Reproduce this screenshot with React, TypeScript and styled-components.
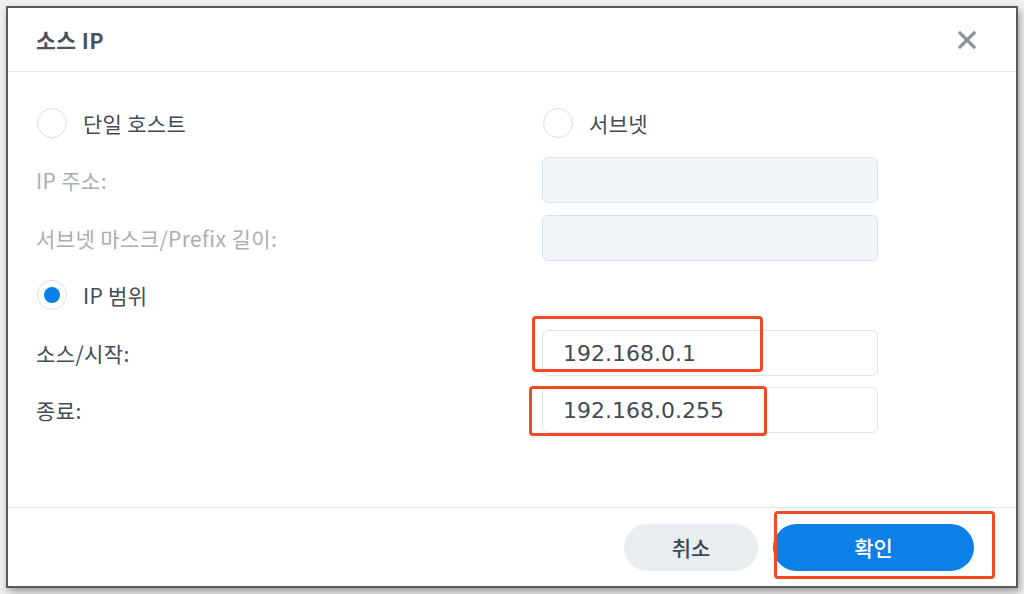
import React, { useState } from "react";
import styled, { createGlobalStyle } from "styled-components";

const GlobalStyle = createGlobalStyle`
  html, body {
    margin: 0;
    padding: 0;
    background: #f1f1f1;
    font-family: "DejaVu Sans", "Noto Sans CJK KR", sans-serif;
  }
`;

const Page = styled.div`
  width: 1024px;
  height: 594px;
  overflow: hidden;
  padding: 6px 0 0 6px;
  box-sizing: border-box;
`;

const Window = styled.div`
  width: 1012px;
  height: 582px;
  box-sizing: border-box;
  border: 2px solid #5a5a5a;
  background: #ffffff;
  box-shadow: 2px 4px 8px rgba(0, 0, 0, 0.35);
  display: flex;
  flex-direction: column;
`;

const Header = styled.div`
  height: 63px;
  display: flex;
  align-items: center;
  justify-content: space-between;
  padding: 0 40px 0 28px;
  border-bottom: 1px solid #e1e8ef;
`;

const Title = styled.div`
  font-family: "Noto Sans CJK KR", sans-serif;
  font-weight: 700;
  font-size: 21.5px;
  letter-spacing: 0.4px;
  color: #4a5460;
`;

const CloseButton = styled.button`
  border: none;
  background: none;
  padding: 0;
  width: 18px;
  height: 18px;
  cursor: pointer;
  display: flex;
`;

const Body = styled.div`
  flex: 1;
  padding: 28px 0 0 28px;
  display: grid;
  grid-template-columns: 506px 336px;
  grid-auto-rows: 46px;
  row-gap: 11.4px;
  align-items: center;
`;

const RadioLabel = styled.label`
  display: flex;
  align-items: center;
  gap: 16px;
  font-family: "Noto Sans CJK KR", sans-serif;
  font-size: 21px;
  letter-spacing: 0.3px;
  color: #424c57;
  cursor: pointer;
`;

const RadioCircle = styled.span<{ $checked: boolean }>`
  width: 30px;
  height: 30px;
  box-sizing: border-box;
  border-radius: 50%;
  border: 1.5px solid #d6dee8;
  display: flex;
  align-items: center;
  justify-content: center;
  margin-left: 1px;

  &::after {
    content: "";
    width: 16px;
    height: 16px;
    border-radius: 50%;
    background: #0a7fe8;
    display: ${({ $checked }) => ($checked ? "block" : "none")};
  }
`;

const FieldLabel = styled.div<{ $disabled?: boolean }>`
  font-family: "Noto Sans CJK KR", sans-serif;
  font-size: 21px;
  letter-spacing: 0.4px;
  color: ${({ $disabled }) => ($disabled ? "#a9aeb5" : "#424c57")};
`;

const InputWrap = styled.div`
  position: relative;
  height: 46px;
`;

const Input = styled.input<{ $disabled?: boolean }>`
  width: 100%;
  height: 100%;
  box-sizing: border-box;
  border: 1.5px solid ${({ $disabled }) => ($disabled ? "#d8e1eb" : "#dce4ed")};
  border-radius: 6px;
  background: ${({ $disabled }) => ($disabled ? "#f3f6f9" : "#ffffff")};
  padding: 2px 0 0 20px;
  font-family: "DejaVu Sans", sans-serif;
  font-size: 22px;
  color: #424c57;
  outline: none;
`;

const Marker = styled.div<{ $top: number; $left: number; $w: number; $h: number }>`
  position: absolute;
  top: ${({ $top }) => $top}px;
  left: ${({ $left }) => $left}px;
  width: ${({ $w }) => $w}px;
  height: ${({ $h }) => $h}px;
  box-sizing: border-box;
  border: 3px solid #f24b24;
  border-radius: 4px;
  pointer-events: none;
`;

const Footer = styled.div`
  height: 78px;
  border-top: 1px solid #e1e8ef;
  display: flex;
  align-items: center;
  justify-content: flex-end;
  gap: 15px;
  padding-right: 42px;
`;

const Button = styled.button<{ $primary?: boolean }>`
  position: relative;
  height: 47px;
  width: ${({ $primary }) => ($primary ? "201px" : "134px")};
  border: none;
  border-radius: 24px;
  background: ${({ $primary }) => ($primary ? "#0a80e8" : "#e8edf2")};
  color: ${({ $primary }) => ($primary ? "#ffffff" : "#3f4953")};
  font-family: "Noto Sans CJK KR", sans-serif;
  font-size: 21px;
  font-weight: 500;
  cursor: pointer;
`;

export default function App() {
  const [mode, setMode] = useState<"host" | "subnet" | "range">("range");

  return (
    <>
      <GlobalStyle />
      <Page>
        <Window>
          <Header>
            <Title>소스 IP</Title>
            <CloseButton aria-label="close">
              <svg width="18" height="18" viewBox="0 0 18 18">
                <path d="M2 2 L16 16 M16 2 L2 16" stroke="#8e959c" strokeWidth="3.2" strokeLinecap="square" />
              </svg>
            </CloseButton>
          </Header>

          <Body>
            <RadioLabel onClick={() => setMode("host")}>
              <RadioCircle $checked={mode === "host"} />
              단일 호스트
            </RadioLabel>
            <RadioLabel onClick={() => setMode("subnet")}>
              <RadioCircle $checked={mode === "subnet"} />
              서브넷
            </RadioLabel>

            <FieldLabel $disabled>IP 주소:</FieldLabel>
            <InputWrap>
              <Input $disabled disabled />
            </InputWrap>

            <FieldLabel $disabled>서브넷 마스크/Prefix 길이:</FieldLabel>
            <InputWrap>
              <Input $disabled disabled />
            </InputWrap>

            <RadioLabel onClick={() => setMode("range")}>
              <RadioCircle $checked={mode === "range"} />
              IP 범위
            </RadioLabel>
            <div />

            <FieldLabel>소스/시작:</FieldLabel>
            <InputWrap>
              <Input defaultValue="192.168.0.1" />
              <Marker $top={-14} $left={-10} $w={231} $h={56} />
            </InputWrap>

            <FieldLabel>종료:</FieldLabel>
            <InputWrap>
              <Input defaultValue="192.168.0.255" />
              <Marker $top={-1} $left={-13} $w={238} $h={50} />
            </InputWrap>
          </Body>

          <Footer>
            <Button>취소</Button>
            <Button $primary>
              확인
              <Marker $top={-13} $left={1} $w={221} $h={68} />
            </Button>
          </Footer>
        </Window>
      </Page>
    </>
  );
}
